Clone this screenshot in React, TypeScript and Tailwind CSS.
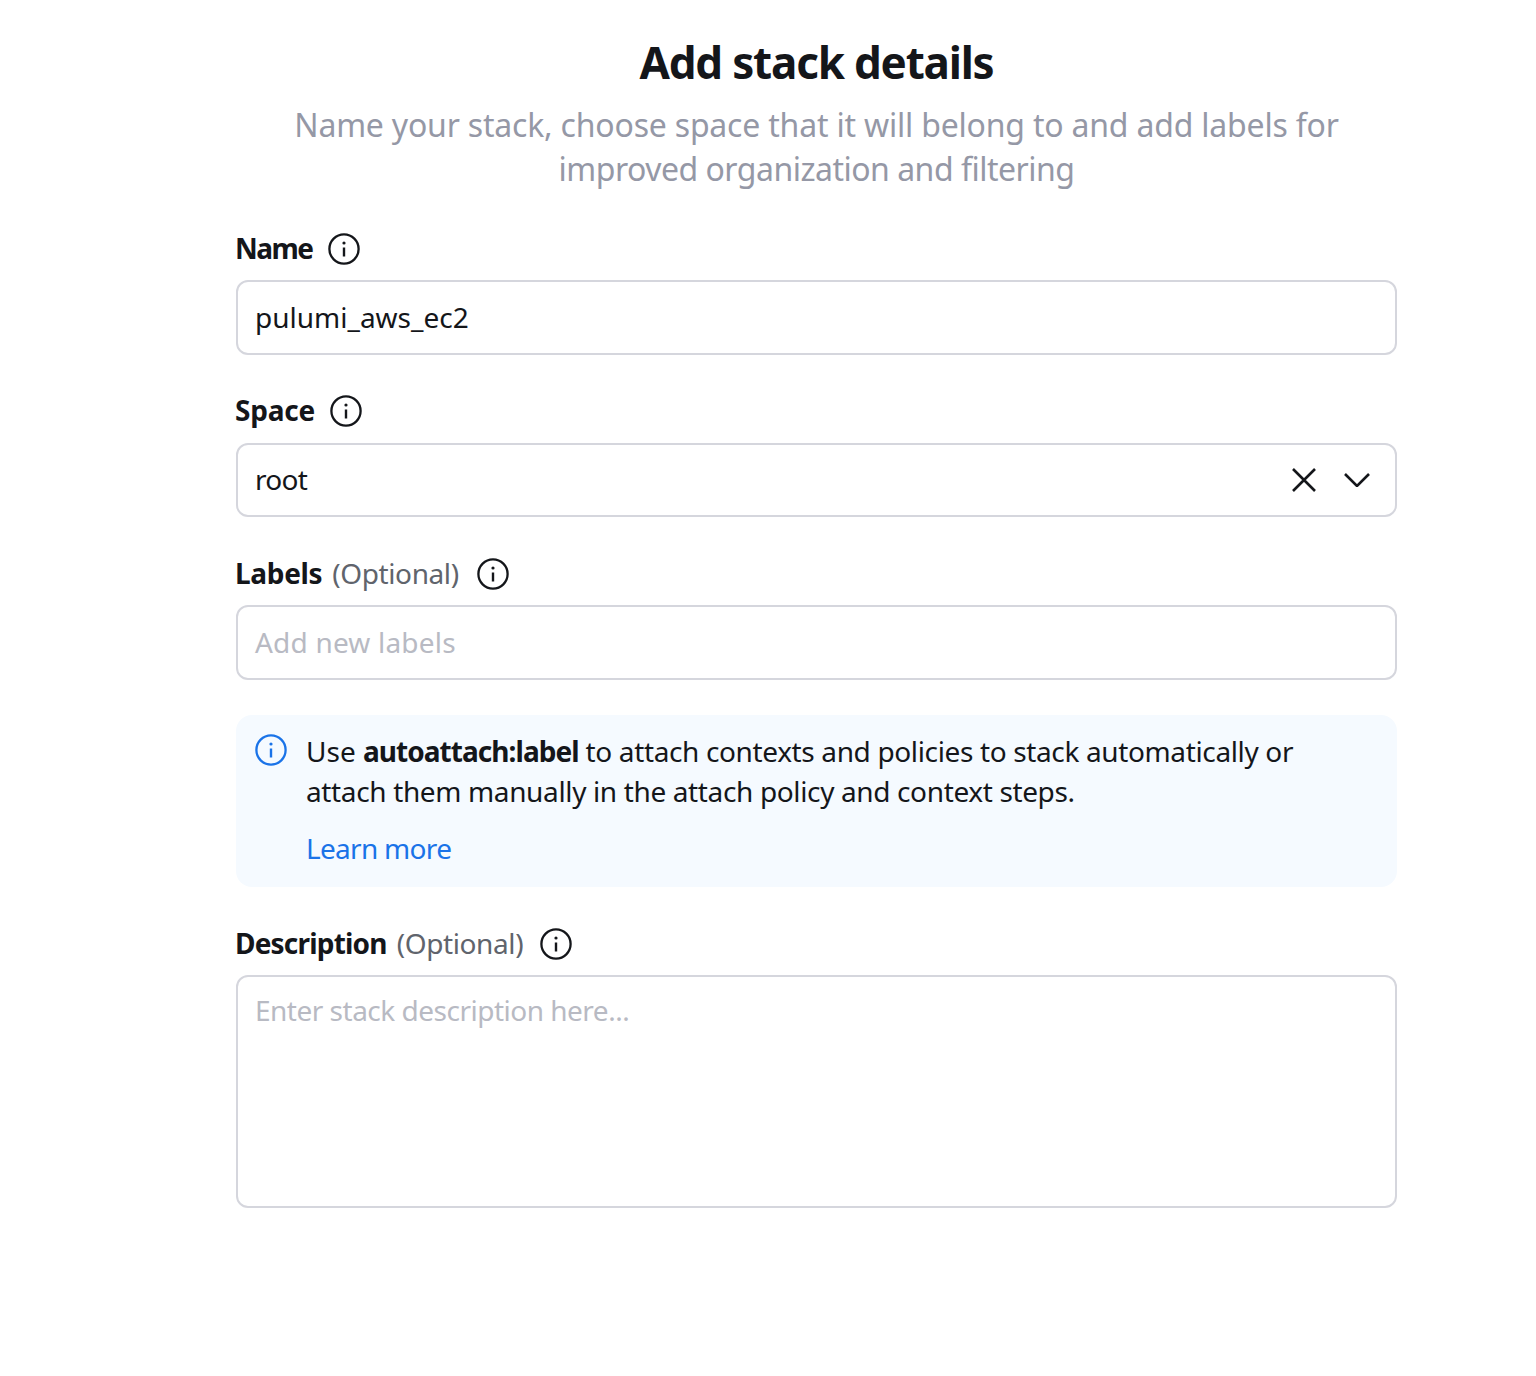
import React from "react";

function Info({ blue = false }: { blue?: boolean }) {
  return (
    <svg width="32" height="32" viewBox="0 0 32 32" fill="none" className={blue ? "text-[#1a73e8] shrink-0" : "text-[#14161a] shrink-0"} stroke="currentColor" strokeWidth="2.3">
      <circle cx="16" cy="16" r="14.6" />
      <path d="M16 14.5V23.5" strokeWidth="2.4" />
      <circle cx="16" cy="10" r="1.6" fill="currentColor" stroke="none" />
    </svg>
  );
}

function Label({ name, track, optional, iconGap = "ml-[15px]", mb = "mb-[15px]" }: { name: string; track: string; optional?: boolean; iconGap?: string; mb?: string }) {
  return (
    <div className={"flex items-center h-[32px] " + mb}>
      <span className={"-ml-[1px] text-[28px] leading-[32px] font-bold text-[#14161a] -translate-y-[1px] " + track}>{name}</span>
      {optional && <span className="ml-[10px] text-[28px] leading-[32px] text-[#60646c] tracking-[-0.4px] -translate-y-[1px]">(Optional)</span>}
      <span className={"flex " + iconGap}><Info /></span>
    </div>
  );
}

export default function App() {
  return (
    <div className="min-h-[1376px] bg-white pl-[236px] pr-[139px] pt-[35px] font-['Noto_Sans','Lato',sans-serif]">
      <h1 className="text-center text-[44px] leading-[54px] font-bold tracking-[-1.2px] text-[#14161a]">Add stack details</h1>
      <p className="mt-[14px] text-center text-[32px] leading-[44px] tracking-[-0.2px] text-[#9598a6] mb-[42px]">
        Name your stack, choose space that it will belong to and add labels for
        <br />
        <span className="tracking-[-0.5px]">improved organization and filtering</span>
      </p>

      <Label name="Name" track="tracking-[-1.5px]" />
      <div className="h-[75px] rounded-[12px] border-2 border-[#d5d6dd] pl-[17px] pr-[18px] pb-[2px] flex items-center text-[28px] text-[#14161a] mb-[40px]">pulumi_aws_ec2</div>

      <Label name="Space" track="tracking-[-0.2px]" mb="mb-[16px]" />
      <div className="h-[74px] rounded-[12px] border-2 border-[#d5d6dd] pl-[17px] pr-[25px] flex items-center justify-between text-[28px] text-[#14161a] mb-[41px]">
        <span className="tracking-[-0.7px] -translate-y-[1px]">root</span>
        <span className="flex items-center gap-[27px]">
          <svg width="26" height="26" viewBox="0 0 26 26" fill="none" stroke="#14161a" strokeWidth="2.6"><path d="M2 2l22 22M24 2L2 24" /></svg>
          <svg width="26" height="14" viewBox="0 0 26 14" fill="none" stroke="#14161a" strokeWidth="2.6"><path d="M1 1l12 12L25 1" /></svg>
        </span>
      </div>

      <Label name="Labels" track="tracking-[-0.33px]" optional iconGap="ml-[18px]" />
      <div className="h-[75px] rounded-[12px] border-2 border-[#d5d6dd] pl-[17px] pr-[18px] pb-[2px] flex items-center text-[28px] tracking-[0.2px] text-[#b8bac3] mb-[35px]">Add new labels</div>

      <div className="h-[172px] rounded-[16px] bg-[#f5faff] pl-[19px] pt-[19px] flex gap-[19px] mb-[41px]">
        <Info blue />
        <div className="text-[28px] leading-[40px] tracking-[-0.36px] text-[#14161a] -mt-[3px]">
          <div><span className="tracking-[0px]">Use </span><b className="tracking-[-0.95px]">autoattach:label</b> to attach contexts and policies to stack automatically or</div>
          <div>attach them manually in the attach policy and context steps.</div>
          <div className="mt-[17px] text-[#1a73e8] tracking-[-0.7px]">Learn more</div>
        </div>
      </div>

      <Label name="Description" track="tracking-[-0.8px]" optional iconGap="ml-[17px]" />
      <div className="h-[233px] rounded-[12px] border-2 border-[#d5d6dd] pl-[17px] pr-[18px] pt-[13px] text-[28px] leading-[40px] tracking-[-0.5px] text-[#b8bac3]">Enter stack description here...</div>
    </div>
  );
}
